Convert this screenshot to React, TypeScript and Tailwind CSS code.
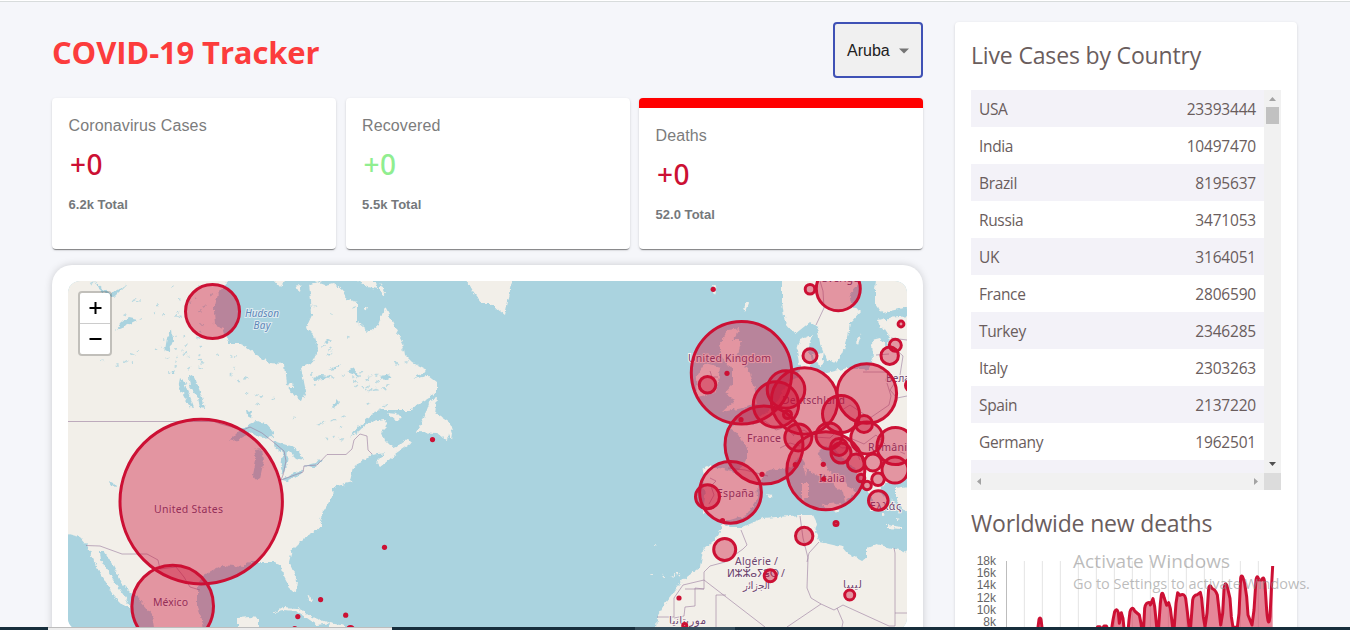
import React from "react";

const countries: [string, string][] = [
  ["USA", "23393444"],
  ["India", "10497470"],
  ["Brazil", "8195637"],
  ["Russia", "3471053"],
  ["UK", "3164051"],
  ["France", "2806590"],
  ["Turkey", "2346285"],
  ["Italy", "2303263"],
  ["Spain", "2137220"],
  ["Germany", "1962501"],
  ["", ""],
];

const land = [
  // North America
  "M60 270L229 270L229 281L218 293L214 310L215 325L223 328L228 343L240 343L257 355L270 363L284 364L286 385L297 399L302 401L306 392L303 377L301 368L313 362L318 348L315 337L306 328L312 315L311 300L309 285L317 282L325 285L333 283L342 290L347 299L357 302L357 322L369 332L378 325L385 307L395 327L403 343L405 355L413 363L427 370L413 379L428 376L436 382L436 393L420 403L412 410L375 410L370 417L358 427L350 438L360 430L370 422L385 420L387 427L382 432L385 440L390 445L393 447L401 444L408 439L412 443L395 455L380 467L376 462L385 453L372 455L353 467L350 480L353 482L333 487L332 497L323 512L320 520L323 527L305 537L292 550L289 562L297 580L296 593L292 592L283 575L282 567L275 562L263 562L250 562L243 567L223 565L203 575L197 587L197 607L203 623L205 640L156 640L152 615L137 597L132 593L122 583L113 565L105 552L100 552L101 560L113 580L127 600L130 607L125 607L113 595L100 573L93 560L87 545L80 537L60 532Z",
  "M467 270L467 281L473 292L481 303L490 303L505 315L509 297L513 281L513 270Z",
  "M437 398L430 400L422 423L416 432L437 433L443 438L447 440L448 432L452 440L453 433L450 423L435 413Z",
  "M387 413L397 414L402 419L395 420Z",
  "M298 284L301 286L300 293L296 290ZM275 281L286 281L280 287ZM363 308L367 306L366 311ZM357 281L376 281L378 289L368 287ZM380 283L385 293L383 296L380 290ZM286 384L293 383L294 388L289 388Z",
  "M273 613L283 607L297 608L313 617L330 623L317 625L307 618L297 612L283 611Z",
  "M238 618L248 617L258 618L258 635L238 635ZM308 596L310 595L312 602L309 600ZM330 623L345 626L345 640L325 640Z",
  // Great Britain, Ireland and northern isles
  "M728 330L740 328L733 340L742 340L737 357L750 373L755 390L757 403L743 408L722 412L735 400L725 393L732 385L732 370L722 357L720 343Z",
  "M705 363L720 367L718 383L715 393L697 397L696 378Z",
  "M747 303L749 303L745 313L743 309ZM712 286L717 285L715 295Z",
  // Continental Europe
  "M730 428L740 423L752 425L763 415L772 407L780 398L788 382L798 377L800 370L797 350L800 340L812 335L808 350L812 360L810 370L827 373L847 368L858 368L868 370L873 360L872 340L880 338L887 347L890 338L883 327L888 318L920 315L920 476L907 477L897 483L887 482L880 490L887 500L883 508L875 508L870 495L862 483L858 473L845 460L832 445L823 447L817 453L823 463L835 477L847 483L857 493L852 495L845 502L843 492L827 480L810 472L800 457L790 467L770 470L757 483L758 498L747 515L723 522L703 512L705 497L703 477L702 470L710 466L737 472L747 460L747 447L737 433Z",
  "M813 355L824 351L822 366L815 364Z",
  // Scandinavia and Finland
  "M782 270L782 303L785 323L795 334L810 322L817 327L820 343L827 360L835 363L843 353L848 337L850 323L860 312L852 303L850 293L860 281L860 270Z",
  "M877 270L875 290L875 303L882 313L907 307L920 300L920 270Z",
  "M860 336L862 333L858 344L856 341ZM878 320L885 318L886 325L880 328Z",
  // Mediterranean islands
  "M820 505L840 503L838 513ZM802 483L808 483L808 498L802 500ZM803 465L807 466L806 477ZM887 525L902 527L902 529L887 528ZM766 494L773 495L770 499Z",
  // Turkey
  "M896 488L920 484L920 515L905 512L900 505L896 500Z",
  // Africa
  "M722 523L730 527L743 527L763 518L790 516L800 515L813 515L817 523L815 532L820 542L842 547L847 553L862 561L867 557L867 548L877 544L887 547L920 555L920 640L655 640L657 617L665 603L683 580L700 567L703 550L718 537Z",
  "M655 544l2 1l-2 1ZM650 575l3-1l0 2ZM661 576l3-2l0 3ZM671 576l4-2l1 3ZM677 573l3 0l-2 3ZM882 513l3 2l-3 1ZM892 499l2 3l-3 0ZM897 518l3 1l-3 1Z",
];

const lakes =
  "M94 281L104 290L110 294L118 290L127 284L122 289L114 297L106 295L98 288ZM121 323L128 318L138 320L130 324L120 328L115 330ZM167 338L172 329L173 342L169 352L165 350ZM189 376L193 375L198 386L203 400L205 409L200 408L198 398L190 387ZM180 378L184 382L188 392L194 408L190 407L183 394L178 388ZM246 411L252 412L251 418L247 416ZM245 426L256 421L266 423L272 430L274 437L262 438L250 433L238 440L229 441L238 432ZM254 450L262 449L264 460L260 478L256 481L253 475L256 460ZM273 441L290 446L299 452L303 460L296 458L288 450L287 463L283 475L281 468L283 453L275 447ZM281 480L293 474L304 470L301 474L286 481ZM303 466L316 463L319 459L322 462L312 468ZM110 481L114 483L116 488L112 487ZM337 400L339 402L334 409L331 408ZM312 378L320 375L330 376L324 379L314 380ZM328 370L342 364L336 369ZM380 377L389 374L391 378L383 380ZM347 371L354 368L360 376L355 374ZM100 361L106 360L99 362ZM324 342L331 339L327 344ZM327 355L334 350L329 356ZM171 372L176 370L173 374Z";

const borders =
  "M68 421.500H214L221 424L232 427L243 430L250 427L262 433L272 441L284 451L286 461L283 475L281 480L303 472L304 466L317 465L327 454.500L346 454.500L352 449L354 440L360 434L367 436L368 450L372 454M86 545.500L100 546L122 554L147 554L158 560L160 569L176 567L184 577L190 587L200 590M741 530L747 545L743 549L725 562L710 566L704 572V589L695 588V606L685 607L684 616L674 618M657 617H674L674 598L683 585L704 580L765 627M685 589H704M716 627V595H726M800 516L803 538L808 558L807 588L811 598L821 604L834 610L843 605L889 626H895V553L894 548M819 542L809 553L807 562M821 604L787 627M837 608L843 622L842 627M895 613H907M816 325L824 308L823 291L820 281M710 478L716 481L711 486L714 495L709 504M728 468L745 470L768 476M863 372H888L886 380L891 396L889 405L870 418L850 405L842 410M891 338L907 340M891 345L903 356L900 375L890 390L897 398L907 396M876 355L889 354M850 438L864 444L876 435L886 445L905 454M833 442L842 448L854 447L860 460M710 371L712 377L718 377M793 435L804 430L814 437L830 438L837 431M752 424L765 421L776 430L786 427L794 436M780 448L790 443L800 446";

const circles: [number, number, number][] = [
  [212.5, 311.5, 27],
  [172.7, 606, 40.8],
  [707.5, 384.7, 8.3],
  [764, 445, 39],
  [776, 404.5, 22.7],
  [786, 389.5, 18.8],
  [804.5, 401, 33.2],
  [866.8, 393.5, 29.8],
  [841, 414, 18.5],
  [829, 436, 13],
  [798.3, 437.5, 13.5],
  [787.5, 414.5, 4],
  [864, 424, 8.5],
  [866.8, 438, 16],
  [839, 447, 8.5],
  [841, 453, 10],
  [895.5, 446, 18.5],
  [895, 470, 13],
  [856, 462.7, 8.7],
  [873, 462.5, 8.5],
  [878.3, 500.5, 9.8],
  [878, 479.3, 6.3],
  [861, 478, 3.8],
  [867, 485.5, 4.3],
  [825.8, 470.7, 39],
  [836, 523.5, 2],
  [730.5, 492.3, 30.9],
  [707.5, 496.7, 12],
  [724.7, 549.5, 11],
  [770.2, 575.7, 6],
  [804.2, 536, 8.7],
  [849.7, 595, 5],
  [838.3, 288.7, 22],
  [810, 289.3, 4.8],
  [810, 355.7, 7],
  [901, 324, 2.9],
  [895.3, 345.3, 6],
  [889.7, 355.7, 8.7],
  [911, 385.5, 5.5],
  [684.7, 625.5, 2],
  [350.5, 629.5, 3],
];

const dots: [number, number][] = [
  [823.3, 464.3],
  [823.7, 479],
  [795.3, 464.7],
  [762, 474.3],
  [722.5, 520.5],
  [741, 419.7],
  [727, 373.3],
  [713.2, 289.3],
  [679, 598],
  [432.5, 439.6],
  [384.5, 547.3],
  [320.6, 599.6],
  [297.8, 616.6],
  [345.7, 615.2],
  [294.7, 628.5],
];

// Small lakes sprinkled over the Canadian shield: [x, y, width, height, count]
const lakeFields: [number, number, number, number, number][] = [
  [80, 283, 130, 60, 32],
  [110, 345, 100, 25, 18],
  [160, 345, 40, 40, 10],
  [205, 350, 70, 60, 12],
  [310, 372, 80, 20, 22],
  [350, 375, 35, 35, 14],
  [312, 295, 40, 60, 6],
  [290, 410, 60, 35, 10],
  [385, 345, 30, 30, 4],
];

function scatterLakes(): string {
  let seed = 7;
  const next = () => {
    seed = (seed * 16807) % 2147483647;
    return seed / 2147483647;
  };
  return lakeFields
    .map(([x, y, w, h, n]) =>
      Array.from({ length: n }, () => {
        const px = x + next() * w;
        const py = y + next() * h;
        const a = 1 + next() * 3;
        const b = (next() - 0.7) * 3.5;
        return `M${px.toFixed(1)} ${py.toFixed(1)}l${a.toFixed(1)} ${b.toFixed(1)}l0.8 1l-${a.toFixed(1)} ${(0.8 - b * 0.7).toFixed(1)}z`;
      }).join("")
    )
    .join("");
}

interface LabelProps {
  x: number;
  y: number;
  w: number;
  children: string;
}

function PlaceLabel({ x, y, w, children }: LabelProps) {
  return (
    <text
      x={x}
      y={y}
      textLength={w}
      className="fill-[#6d4570] stroke-[#f6f1ee] stroke-2 text-[10.500px] [font-family:'Noto_Sans','DejaVu_Sans',sans-serif] [paint-order:stroke]"
    >
      {children}
    </text>
  );
}

function WorldMap() {
  return (
    <svg viewBox="68 281 839 349" className="block h-[349px] w-[839px] bg-[#aad3df]">
      <defs>
        <filter id="coast" x="0" y="0" width="100%" height="100%">
          <feTurbulence type="fractalNoise" baseFrequency="0.2" numOctaves="3" seed="4" result="n" />
          <feDisplacementMap in="SourceGraphic" in2="n" scale="5" xChannelSelector="R" yChannelSelector="G" />
        </filter>
      </defs>
      <g filter="url(#coast)">
        <rect x="50" y="260" width="880" height="390" fill="#aad3df" />
        <path d={land.join("")} fill="#f2efe9" />
        <path d={lakes} fill="#aad3df" />
        <path d={scatterLakes()} fill="#aad3df" opacity="0.8" />
      </g>
      <path d={borders} fill="none" stroke="#9a7b9f" strokeOpacity="0.6" strokeWidth="1" />
      <g className="fill-[#5d86b8] stroke-[#dcebf0] stroke-2 text-[10px] italic [font-family:'Noto_Sans',sans-serif] [paint-order:stroke]">
        <text x="245" y="316.500" textLength="34">Hudson</text>
        <text x="253.500" y="328.500" textLength="17">Bay</text>
      </g>
      <PlaceLabel x={154} y={513} w={69}>United States</PlaceLabel>
      <PlaceLabel x={153} y={606} w={35}>México</PlaceLabel>
      <PlaceLabel x={688} y={362} w={83}>United Kingdom</PlaceLabel>
      <PlaceLabel x={747} y={442} w={34}>France</PlaceLabel>
      <PlaceLabel x={717} y={497} w={37}>España</PlaceLabel>
      <PlaceLabel x={782} y={404} w={63}>Deutschland</PlaceLabel>
      <PlaceLabel x={819} y={482} w={26}>Italia</PlaceLabel>
      <PlaceLabel x={822} y={282} w={37}>Sverige</PlaceLabel>
      <PlaceLabel x={886} y={382} w={46}>Беларусь</PlaceLabel>
      <PlaceLabel x={868} y={451} w={45}>România</PlaceLabel>
      <PlaceLabel x={870} y={510} w={31}>Ελλάς</PlaceLabel>
      <PlaceLabel x={735} y={565} w={43}>Algérie /</PlaceLabel>
      <PlaceLabel x={727} y={577} w={58}>ⵍⵣⵣⴰⵢⴻⵔ /</PlaceLabel>
      <PlaceLabel x={743} y={589} w={27}>الجزائر</PlaceLabel>
      <PlaceLabel x={669} y={624} w={37}>موريتانيا</PlaceLabel>
      <PlaceLabel x={843} y={588} w={19}>ليبيا</PlaceLabel>
      <g fill="#cc1034" fillOpacity="0.4" stroke="#cc1034" strokeWidth="3">
        <ellipse cx="201.200" cy="501.600" rx="81.200" ry="82.400" />
        <ellipse cx="741.500" cy="372.700" rx="50.200" ry="51.300" />
        {circles.map(([cx, cy, r], i) => (
          <circle key={i} cx={cx} cy={cy} r={r} />
        ))}
      </g>
      <g fill="#cc1034">
        {dots.map(([cx, cy], i) => (
          <circle key={i} cx={cx} cy={cy} r="2.600" />
        ))}
      </g>
    </svg>
  );
}

interface StatCardProps {
  title: string;
  cases: string;
  total: string;
  color: string;
  active?: boolean;
}

function StatCard({ title, cases, total, color, active }: StatCardProps) {
  return (
    <div
      className={`h-[151px] flex-1 rounded bg-white px-4 pt-4 font-['Liberation_Sans',Arial,sans-serif] shadow-[0_2px_1px_-1px_rgba(0,0,0,0.35),0_1px_1px_0_rgba(0,0,0,0.12),0_1px_3px_0_rgba(0,0,0,0.12)] ${
        active ? "border-t-[10px] border-[#ff0000]" : ""
      }`}
    >
      <p className="pl-[0.500px] text-base leading-6 tracking-[0.130px] text-[#7c7c7c]">{title}</p>
      <h2
        className={`mt-2 pl-0.5 text-[28px] leading-9 font-medium tracking-[0.500px] [font-family:'Noto_Sans',sans-serif] ${color}`}
      >
        {cases}
      </h2>
      <p className="mt-[13px] pl-[0.500px] text-[13px] leading-5 font-bold tracking-[0.040px] text-[#75787b]">
        {total}
      </p>
    </div>
  );
}

function CaseTable() {
  return (
    <div className="grid h-[400px] w-[310px] grid-cols-[293px_17px] grid-rows-[383px_17px]">
      <div className="overflow-hidden">
        {countries.map(([name, value], i) => (
          <div
            key={i}
            className={`flex h-[37px] items-center justify-between px-2 pt-0.5 text-[15.500px] text-[#6a5d5d] ${
              i % 2 === 0 ? "bg-[#f3f2f8]" : "bg-white"
            }`}
          >
            <span className="tracking-[-0.350px]">{name}</span>
            <span className="tracking-[-0.200px]">{value}</span>
          </div>
        ))}
      </div>
      <div className="flex flex-col items-center bg-[#f1f1f1]">
        <svg width="17" height="17" viewBox="0 0 17 17">
          <path d="M5 11L8.500 7L12 11Z" fill="#a3a3a3" />
        </svg>
        <div className="h-[17px] w-[13px] bg-[#c1c1c1]" />
        <svg className="mt-auto" width="17" height="17" viewBox="0 0 17 17">
          <path d="M5 6L12 6L8.500 10Z" fill="#505050" />
        </svg>
      </div>
      <div className="flex justify-between bg-[#f1f1f1]">
        <svg width="17" height="17" viewBox="0 0 17 17">
          <path d="M10 5L6 8.500L10 12Z" fill="#a3a3a3" />
        </svg>
        <svg width="17" height="17" viewBox="0 0 17 17">
          <path d="M7 5L11 8.500L7 12Z" fill="#a3a3a3" />
        </svg>
      </div>
      <div className="bg-[#dcdcdc]" />
    </div>
  );
}

const series =
  "M199 700L288 640L293 600L297 568Q300 560 303 568L307 600L320 640L450 640L466 605L473 590L480 590L486 600L492 588L499 588L506 602L514 602L519 570L524 545Q530 532 535 548L538 580L544 548L549 565L553 605L564 605L567 570L570 545Q577 526 584 543L598 555L603 580L606 605L611 590L614 535Q617 515 630 518L631 525L639 506L644 530L650 590L656 590L661 520L664 495Q667 480 673 505L680 526L686 518L691 535L699 600L702 600L708 520L713 488L720 496Q733 488 737 505L742 545L747 590L752 590L758 510Q760 495 772 494L781 487L785 505L790 560L795 590L801 550L806 475Q809 460 816 475Q826 478 832 495L836 530L842 585L848 550L852 480Q855 445 863 475L870 505L874 560L879 592L892 592L897 550L902 445Q905 425 914 460L920 500L924 555L936 585L942 540L948 450Q951 430 957 450L965 450Q972 432 975 465L980 540Q985 600 990 560L994 480L998 408";

function DeathsChart() {
  const gridX = Array.from({ length: 14 }, (_, i) => 253 + i * 54);
  return (
    <svg viewBox="93 342 1026 249" className="block h-[83px] w-[342px]">
      {gridX.map((x) => (
        <path key={x} d={`M${x} 393V600`} stroke="#e4e4e4" strokeWidth="3" />
      ))}
      <path d="M199.500 393V600" stroke="#bdbdbd" strokeWidth="3" />
      {["18k", "16k", "14k", "12k", "10k", "8k"].map((t, i) => (
        <text
          key={t}
          x="168"
          y={405 + i * 36.6}
          textAnchor="end"
          className="fill-[#666] text-[36px] [font-family:'Liberation_Sans',Arial,sans-serif]"
        >
          {t}
        </text>
      ))}
      <path d={`${series}V700H199Z`} fill="#cc1034" fillOpacity="0.5" />
      <path d={series} fill="none" stroke="#cc1034" strokeWidth="9" strokeLinejoin="round" />
    </svg>
  );
}

export default function App() {
  return (
    <div className="relative flex h-[630px] w-[1350px] flex-col overflow-hidden border-t border-white bg-[#f5f6fa] font-['Open_Sans','Noto_Sans',sans-serif]">
      <div className="h-px shrink-0 bg-[#d8dcdc]" />
      <div className="flex min-h-0 flex-1 gap-8 overflow-hidden pt-5 pl-[52px]">
        <main className="w-[871px] shrink-0">
          <header className="flex h-14 items-center justify-between">
            <h1 className="mt-1 text-[31px] leading-10 font-bold tracking-[-0.130px] text-[#fc3c3c]">
              COVID-19 Tracker
            </h1>
            <button className="flex h-14 w-[90px] items-center justify-between rounded border-2 border-[#3f51b5] bg-[#f0f0f0] pt-0.5 pr-[11px] pl-3 font-['Liberation_Sans',Arial,sans-serif] text-base text-[#212121]">
              Aruba
              <svg width="12" height="6" viewBox="0 0 12 6">
                <path d="M1 0.500H11L6 5.500Z" fill="#757575" />
              </svg>
            </button>
          </header>
          <section className="mt-5 flex gap-[9.500px]">
            <StatCard title="Coronavirus Cases" cases="+0" total="6.2k Total" color="text-[#cc1034]" />
            <StatCard title="Recovered" cases="+0" total="5.5k Total" color="text-[#90ee90]" />
            <StatCard title="Deaths" cases="+0" total="52.0 Total" color="text-[#cc1034]" active />
          </section>
          <section className="mt-4 h-[500px] rounded-[20px] bg-white p-4 shadow-[0_0_8px_-1px_rgba(0,0,0,0.22)]">
            <div className="overflow-hidden rounded-xl">
              <div className="relative">
                <WorldMap />
                <div className="absolute top-2.5 left-2.5 flex w-[34px] flex-col overflow-hidden rounded border-2 border-black/20 bg-white bg-clip-padding">
                  <button className="flex h-[31px] items-center justify-center border-b border-[#ccc]">
                    <svg width="14" height="14" viewBox="0 0 14 14">
                      <path d="M7.500 1V13M1.500 7H13.500" stroke="#000" strokeWidth="2" />
                    </svg>
                  </button>
                  <button className="flex h-[30px] items-center justify-center">
                    <svg width="14" height="14" viewBox="0 0 14 14">
                      <path d="M1.500 7H13.500" stroke="#000" strokeWidth="2" />
                    </svg>
                  </button>
                </div>
              </div>
            </div>
          </section>
        </main>
        <aside className="h-[700px] w-[342px] shrink-0 rounded bg-white pl-4 shadow-[0_1px_3px_0_rgba(0,0,0,0.15)]">
          <h3 className="pt-[15px] text-[23px] leading-9 tracking-[-0.160px] text-[#6a5d5d]">Live Cases by Country</h3>
          <div className="mt-[17px]">
            <CaseTable />
          </div>
          <h3 className="mt-[15px] text-[23px] leading-9 tracking-[-0.180px] text-[#6a5d5d]">Worldwide new deaths</h3>
          <div className="mt-[3px]">
            <DeathsChart />
          </div>
        </aside>
      </div>
      <div className="relative flex h-[3px] shrink-0 bg-[#172e3c]">
        <div className="ml-12 w-[344px] border-t border-[#bdbdbd] bg-[#ededed]" />
        <div className="ml-[243px] w-[100px] bg-[#354d5b]" />
      </div>
      <div className="absolute top-[546px] left-[1073px] whitespace-nowrap text-[#8f8f8f]/60">
        <p className="text-[19px] leading-7 tracking-[0.080px]">Activate Windows</p>
        <p className="-mt-px text-[14.500px] leading-5 tracking-[-0.020px]">Go to Settings to activate Windows.</p>
      </div>
    </div>
  );
}
